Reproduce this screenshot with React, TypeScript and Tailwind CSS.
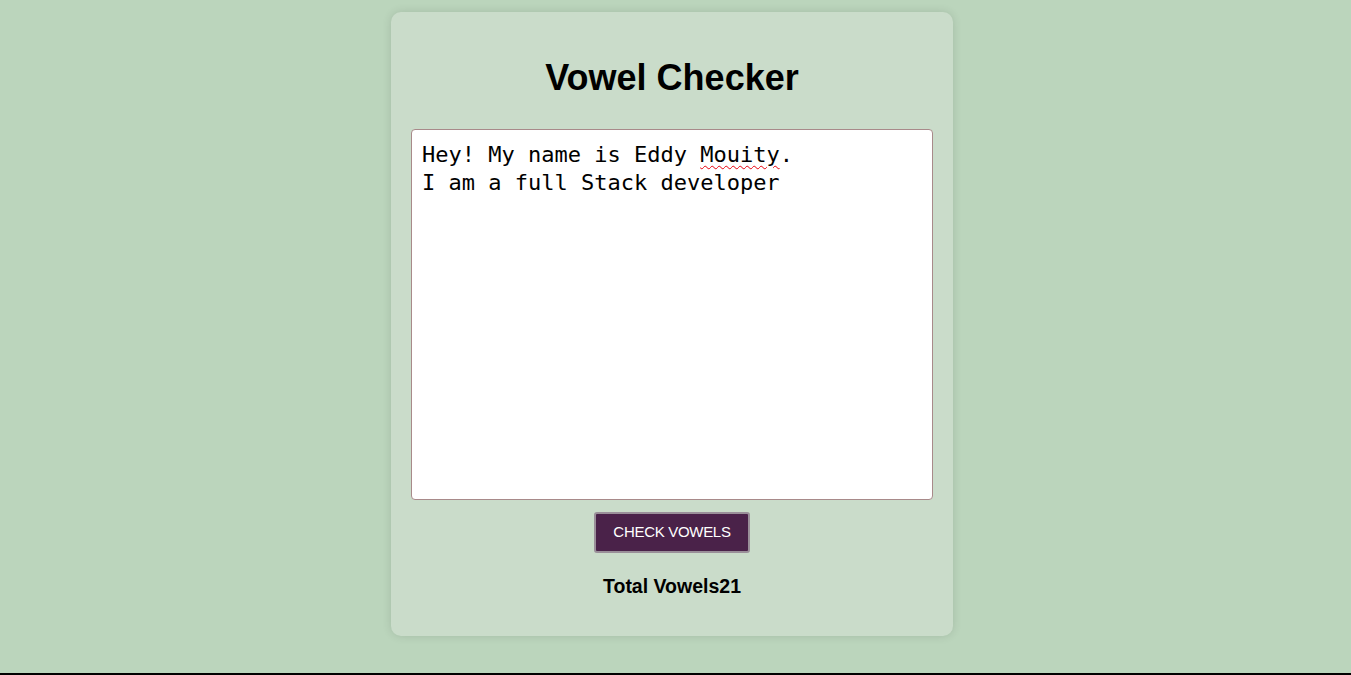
import { useState } from 'react'

// Vowel counter card: a textarea-like box, a check button and the total.
export default function App() {
  const [text] = useState('Hey! My name is Eddy Mouity.\nI am a full Stack developer')
  const [total, setTotal] = useState<number | null>(21)

  function check() {
    setTotal((text.match(/[aeiou]/gi) ?? []).length)
  }

  return (
    <div className="min-h-[675px] w-full bg-[#bbd5bc] border-b-2 border-black pt-3 pr-[7px] font-['Liberation_Sans',Arial,sans-serif]">
      <div className="mx-auto w-[562px] h-[624px] rounded-[10px] bg-[#cadcca] shadow-[0_0_10px_rgba(0,0,0,0.12)] px-5 pt-[45px]">
        <h1 className="text-center text-[36px] leading-[42px] font-bold text-black">Vowel Checker</h1>
        <div className="mt-[30px] h-[371px] rounded border border-[#a88a8a] bg-white px-[10px] pt-[11px] font-['DejaVu_Sans_Mono',monospace] text-[22px] leading-[28px] text-black whitespace-pre">
          {'Hey! My name is Eddy '}
          <span className="underline decoration-wavy decoration-red-600 decoration-1 underline-offset-[3px]">Mouity</span>
          {'.\nI am a full Stack developer'}
        </div>
        <div className="mt-[12px] flex justify-center">
          <button type="button" onClick={check}
            className="h-[41px] w-[156px] rounded-[3px] border-2 border-[#9a8f99] bg-[#4a2249] text-[15px] tracking-[-0.3px] text-white">
            CHECK VOWELS
          </button>
        </div>
        <p className="mt-[21px] text-center text-[19.5px] leading-[24px] font-bold text-black">Total Vowels{total}</p>
      </div>
    </div>
  )
}
